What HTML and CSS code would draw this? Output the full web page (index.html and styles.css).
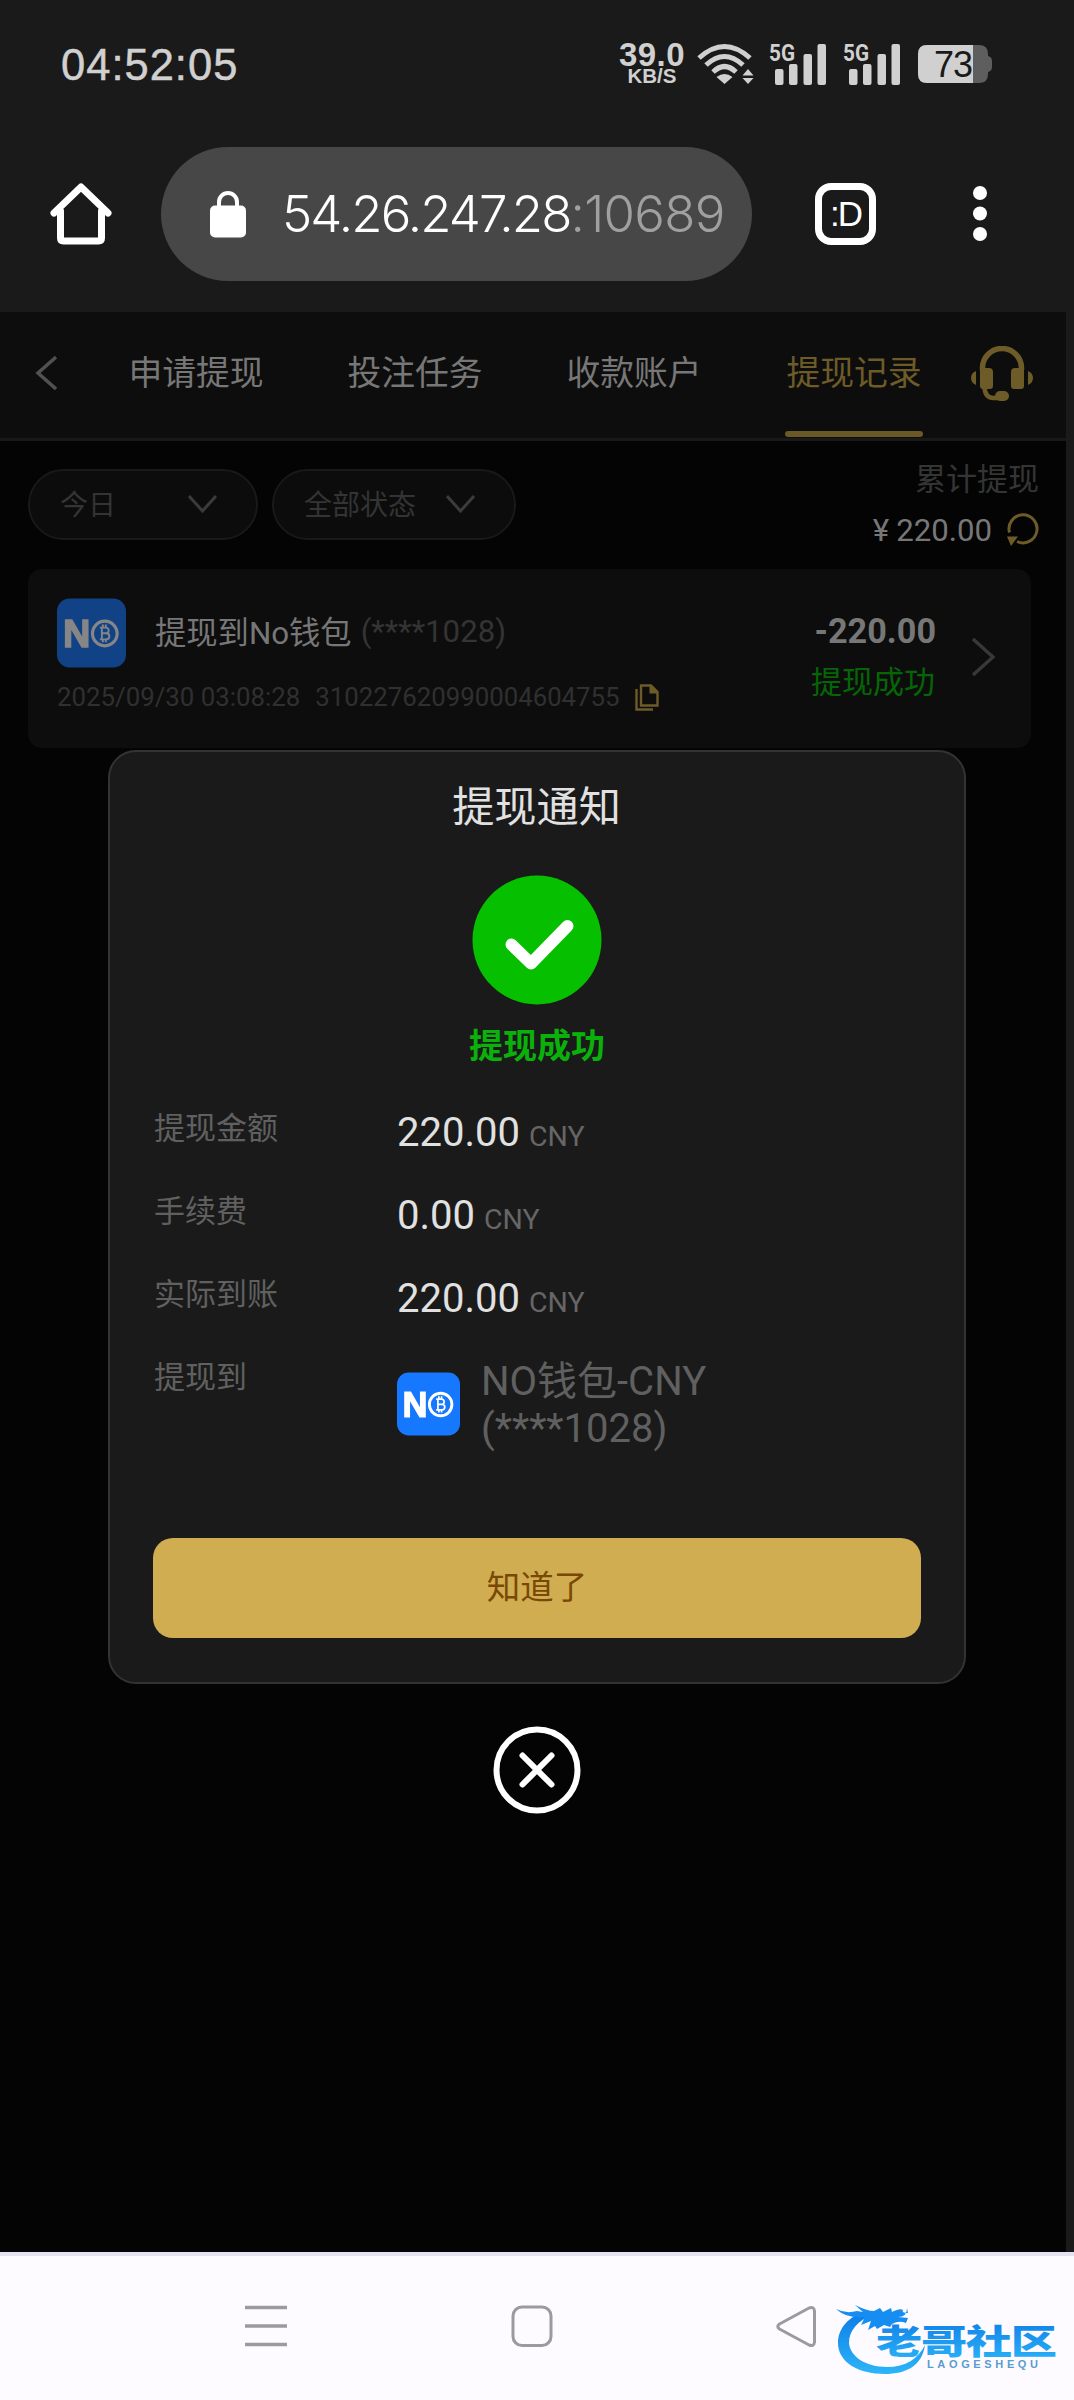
FILE: index.html
```html
<!DOCTYPE html>
<html lang="zh-CN">
<head>
<meta charset="utf-8">
<title>提现记录</title>
<link rel="stylesheet" href="styles.css">
</head>
<body>
<svg class="defs" width="0" height="0">
  <symbol id="no-logo" viewBox="0 0 70 70">
    <rect width="70" height="70" rx="13" fill="#1677ff"/>
    <path d="M8 50V21h7.500l10 17.500V21H32v29h-7L14.500 32v18z" fill="#fff"/>
    <circle cx="48.500" cy="35.500" r="12.500" fill="none" stroke="#fff" stroke-width="3.200"/>
    <path d="M43.500 29.500h6a2.900 2.900 0 0 1 0 5.800h-4 4.500a3.100 3.100 0 0 1 0 6.200h-6.500M45.500 29.500v12M46.500 26.500v3M49.500 26.500v3M46.500 41.500v3M49.500 41.500v3" fill="none" stroke="#fff" stroke-width="1.900"/>
  </symbol>
  <symbol id="bars" viewBox="0 0 60 42">
    <rect x="6" y="26" width="8.500" height="16" rx="2"/><rect x="20" y="21" width="8.500" height="21" rx="2"/><rect x="34.500" y="11" width="8.500" height="31" rx="2"/><rect x="48.500" y="1" width="8.500" height="41" rx="2"/>
  </symbol>
</svg>

<header class="browser">
  <div class="status">
    <span class="clock">04:52:05</span>
    <div class="speed"><b>39.0</b><span>KB/S</span></div>
    <svg class="wifi" width="60" height="42" viewBox="0 0 60 42" fill="none" stroke="#d0d0d0" stroke-width="5">
      <path d="M2 15Q27.500-8 53 15M9 22Q27.500 5 46 22M16 29Q27.500 18 39 29"/>
      <path d="M27.500 41l-8-7q8-6 16 0zM51 26l5.500 6.500h-11zM51 41l5.500-6h-11z" fill="#d0d0d0" stroke="none"/>
    </svg>
    <svg class="signal" width="60" height="42"><text x="0" y="18" font-size="24" font-weight="700" textLength="26" lengthAdjust="spacingAndGlyphs">5G</text><use href="#bars"/></svg>
    <svg class="signal second" width="60" height="42"><text x="0" y="18" font-size="24" font-weight="700" textLength="26" lengthAdjust="spacingAndGlyphs">5G</text><use href="#bars"/></svg>
    <svg class="battery" width="76" height="42" viewBox="0 0 76 42">
      <path d="M10 2h52q9 0 9 9v2q4 1 4 5v6q0 4-4 5v2q0 9-9 9H10q-9 0-9-9V11q0-9 9-9z" fill="#5e5e5e"/>
      <path d="M10 2h46v38H10q-9 0-9-9V11q0-9 9-9z" fill="#d0d0d0"/>
      <text x="17" y="34" font-size="36" textLength="39" fill="#1a1a1a">73</text>
    </svg>
  </div>
  <div class="toolbar">
    <svg class="home" width="62" height="62" viewBox="0 0 62 62" fill="none" stroke="#fff" stroke-width="7" stroke-linecap="round" stroke-linejoin="round">
      <path d="M4 30L31 4l27 26M10.500 28v27q0 3 3 3h35q3 0 3-3V28"/>
    </svg>
    <div class="address">
      <svg width="36" height="48" viewBox="0 0 36 48"><path d="M9 18v-6a9 9 0 0 1 18 0v6" fill="none" stroke="#fff" stroke-width="4"/><rect y="15.500" width="36" height="32" rx="5" fill="#fff"/></svg>
      <span class="url">54.26.247.28<i>:10689</i></span>
    </div>
    <div class="tabs-button">:D</div>
    <svg class="dots" width="14" height="56" viewBox="0 0 14 56" fill="#fff"><circle cx="7" cy="7" r="7"/><circle cx="7" cy="27.500" r="7"/><circle cx="7" cy="48" r="7"/></svg>
  </div>
</header>

<main class="page">
  <nav class="topnav">
    <svg class="back" width="22" height="36" viewBox="0 0 22 36" fill="none" stroke="#515151" stroke-width="3.500"><path d="M21 2L3 18l18 16"/></svg>
    <span class="tab">申请提现</span>
    <span class="tab">投注任务</span>
    <span class="tab">收款账户</span>
    <span class="tab active">提现记录</span>
    <svg class="headset" width="62" height="56" viewBox="0 0 62 56" fill="#6d5b28">
      <path d="M11.500 24v-2a19.500 19.500 0 0 1 39 0v2" fill="none" stroke="#6d5b28" stroke-width="5.500"/>
      <path d="M9 22h9q4 0 4 4v14q0 3-3 3h-7q-3 0-3-3zM53 22h-9q-4 0-4 4v14q0 3 3 3h7q3 0 3-3zM5 25v14Q0 37 0 32t5-7zM57 25v14q5-2 5-7t-5-7z"/>
      <path d="M13.500 42q1 10 9 10h6" fill="none" stroke="#6d5b28" stroke-width="4.500"/><rect x="24" y="45" width="14" height="10" rx="5"/>
    </svg>
  </nav>

  <section class="filters">
    <div class="select today"><span>今日</span><svg width="29" height="19" viewBox="0 0 29 19"><path d="M1 1l13.500 15L28 1"/></svg></div>
    <div class="select state"><span>全部状态</span><svg width="29" height="19" viewBox="0 0 29 19"><path d="M1 1l13.500 15L28 1"/></svg></div>
    <div class="total">
      <div class="total-label">累计提现</div>
      <div class="total-value"><span class="yen">¥</span><span>220.00</span>
        <svg width="34" height="34" viewBox="0 0 34 34"><path d="M3.500 19.500A14 14 0 1 1 11 28.500" fill="none" stroke="#6d5b28" stroke-width="3"/><path d="M1 23.500h11L5 33z" fill="#6d5b28"/></svg>
      </div>
    </div>
  </section>

  <article class="record">
    <div class="record-main">
      <div class="record-title"><svg width="69" height="70"><use href="#no-logo"/></svg><span>提现到No钱包</span><em>(****1028)</em></div>
      <div class="record-meta"><span class="date">2025/09/30 03:08:28</span><span class="order">310227620990004604755</span>
        <svg width="24" height="28" viewBox="0 0 24 28" fill="none" stroke="#6d5b28" stroke-width="2.400"><path d="M1.500 5v20.500H18M6 1.500h10l6.500 6.500v13.500H6z"/><path d="M14.500 1v8.500H23L16 1z" fill="#6d5b28" stroke="none"/></svg>
      </div>
    </div>
    <div class="record-result"><b>-220.00</b><span>提现成功</span></div>
    <svg class="next" width="24" height="40" viewBox="0 0 24 40" fill="none" stroke="#383838" stroke-width="3.500"><path d="M2 2l20 18L2 38"/></svg>
  </article>
</main>

<footer class="sysnav">
  <svg width="42" height="44" viewBox="0 0 42 44" stroke="#9b9b9d" stroke-width="3.600"><path d="M0 2.500h42M0 21h42M0 39.500h42"/></svg>
  <svg class="nav-home" width="42" height="44" viewBox="0 0 42 44" fill="none" stroke="#9b9b9d" stroke-width="3"><rect x="2" y="2" width="38" height="38.500" rx="9"/></svg>
  <svg class="nav-back" width="42" height="44" viewBox="0 0 42 44" fill="none" stroke="#9b9b9d" stroke-width="3"><path d="M3.500 19L33 3q5-2 5.500 3v31q-.5 5-5.500 3L3.500 24q-3.500-2.500 0-5z"/></svg>
</footer>

<div class="modal">
  <h1>提现通知</h1>
  <svg class="success" width="130" height="130" viewBox="0 0 130 130"><circle cx="65" cy="65" r="64.500" fill="#06c000"/><path d="M39.500 69.500L59 88.500 95.500 51" fill="none" stroke="#fff" stroke-width="12" stroke-linecap="round" stroke-linejoin="round"/></svg>
  <div class="success-label">提现成功</div>
  <dl>
    <dt>提现金额</dt><dd>220.00<small>CNY</small></dd>
    <dt>手续费</dt><dd>0.00<small>CNY</small></dd>
    <dt>实际到账</dt><dd>220.00<small>CNY</small></dd>
    <dt>提现到</dt><dd class="wallet"><svg width="63" height="64"><use href="#no-logo"/></svg><span>NO钱包-CNY<br>(****1028)</span></dd>
  </dl>
  <button>知道了</button>
</div>
<svg class="close" width="88" height="88" viewBox="0 0 88 88" fill="none" stroke="#fff" stroke-width="6" stroke-linecap="round"><circle cx="44" cy="44" r="40.500"/><path d="M29.500 29.500l29 29M58.500 29.500l-29 29"/></svg>

<svg class="watermark" width="240" height="80" viewBox="0 0 240 80">
  <defs><linearGradient id="sea" x1="0" y1="0" x2="0" y2="1"><stop stop-color="#0d7be6"/><stop offset="1" stop-color="#2cb5f8"/></linearGradient></defs>
  <path d="M37 11C18 16 8 29 8 43c0 19 20 31 47 31 21 0 37-8 40-29-7 14-19 22-38 22-22 0-37-11-38-24 0-13 9-22 24-29z" fill="url(#sea)"/>
  <path d="M6 9q10 5 21 2l6 1-8-7q12 6 19 6l6-3 3 4 8-4 1 4q8-4 11-2-2 3 5 3l-1-5q0 9-9 9l10 1-2 5q-7-3-14 1l-2 3-6-2-7 4-2-3-7 4 3-9-10 4 4-8q-18 2-29-8z" fill="#168df0"/>
  <text class="brand" x="0" y="0" transform="translate(46 54) scale(1.36 1)" textLength="133">老哥社区</text>
  <text class="pinyin" x="97" y="67.500" textLength="111">LAOGESHEQU</text>
</svg>
</body>
</html>
```
FILE: styles.css
```css
* { box-sizing: border-box; }
body { margin: 0; width: 1074px; height: 2400px; position: relative; overflow: hidden; background: #1a1a1a; font-family: Roboto, "Noto Sans CJK SC", sans-serif; }
svg { display: block; flex: none; }
.defs { position: absolute; }
span, b, em, small { white-space: nowrap; }

.browser { height: 312px; color: #fff; }
.status { height: 130px; display: flex; align-items: flex-start; padding-top: 43px; color: #d0d0d0; fill: #d0d0d0; font-family: "Liberation Sans", sans-serif; }
.clock { width: 617px; padding-left: 61px; font-size: 43.5px; line-height: 44px; letter-spacing: 1px; -webkit-text-stroke: .5px #d0d0d0; }
.speed { width: 70px; display: flex; flex-direction: column; align-items: center; }
.speed b { font-size: 33px; line-height: 24px; letter-spacing: .5px; }
.speed span { font-size: 20.5px; line-height: 18px; font-weight: 700; }
.wifi { margin-left: 10px; }
.signal { margin-left: 12px; overflow: visible; font-family: Roboto, sans-serif; }
.signal.second { margin-left: 14px; }
.battery { margin-left: 14px; }
.toolbar { display: flex; align-items: center; height: 168px; padding-left: 50px; }
.address { display: flex; align-items: center; width: 591px; height: 134px; margin-left: 49px; padding-left: 49px; border-radius: 67px; background: #474747; }
.url { margin-left: 36px; font: 300 51px/60px Inter, "Liberation Sans", sans-serif; letter-spacing: -1.9px; }
.url i { color: #a0a0a0; font-style: normal; letter-spacing: -.7px; }
.tabs-button { width: 61px; height: 62px; margin-left: 63px; border: 7px solid #fff; border-radius: 16px; text-align: center; font: 35px/47px "Liberation Sans", sans-serif; letter-spacing: -2px; }
.dots { margin-left: 97px; }

.page { width: 1066px; height: 1940px; background: #040404; }
.topnav { display: flex; height: 129px; padding-left: 35px; background: #0d0d0d; border-bottom: 3px solid #191919; }
.back { margin-top: 43px; }
.tab { width: 138px; height: 125px; margin-left: 81px; text-align: center; font-size: 33.8px; line-height: 124px; color: #777; }
.back + .tab { margin-left: 70px; }
.tab.active { position: relative; margin-left: 82px; color: #6d5b28; }
.tab.active::after { content: ""; position: absolute; left: 0; bottom: 0; width: 138px; height: 6px; border-radius: 3px; background: #6a5827; }
.headset { margin: 34px 0 0 48px; }
.filters { display: flex; height: 128px; padding: 28px 27px 0 28px; }
.select { display: flex; align-items: center; height: 71px; border: 2px solid #191919; border-radius: 36px; background: #0c0c0c; color: #343434; font-size: 28px; padding-left: 30px; }
.select span { margin-top: -3px; }
.select svg { fill: none; stroke: #3b3b3b; stroke-width: 3; }
.today { width: 230px; }
.today svg { margin-left: 72px; }
.state { width: 244px; margin-left: 14px; }
.state svg { margin-left: 30px; }
.total { margin: -10px 0 0 auto; }
.total-label { text-align: right; font-size: 31px; line-height: 42px; color: #353535; }
.total-value { display: flex; align-items: center; height: 52px; margin: 3px -1px 0 0; color: #777; font-size: 31.2px; }
.yen { margin-right: 7px; }
.total-value svg { margin-left: 14px; }
.record { display: flex; width: 1003px; height: 179px; margin-left: 28px; padding: 29px 36px 0 29px; border-radius: 14px; background: #0d0d0d; }
.record-title { display: flex; align-items: center; height: 70px; color: #777; font-size: 31.3px; }
.record-title svg { opacity: .5; }
.record-title span { margin: -5px 0 0 29px; }
.record-title em { margin: -4px 0 0 9px; color: #343434; font-style: normal; font-size: 31.2px; }
.record-meta { display: flex; height: 58px; align-items: center; color: #303030; font-size: 25.800px; }
.order { margin-left: 15px; }
.record-meta svg { margin: 2px 0 0 15px; }
.record-result { display: flex; flex-direction: column; align-items: flex-end; margin-left: auto; }
.record-result b { margin-top: 13px; font-size: 34.200px; line-height: 40px; color: #777; }
.record-result span { margin-top: 10px; padding-right: 1px; font-size: 31px; line-height: 44px; color: #056605; }
.next { margin: 39px 0 0 35px; }

.sysnav { display: flex; align-items: flex-start; height: 148px; padding: 49px 0 0 245px; background: #fdfbff; border-top: 4px solid #e2e2f0; }
.nav-home { margin-left: 224px; }
.nav-back { margin-left: 223px; }

.modal { position: absolute; left: 108px; top: 750px; width: 858px; height: 934px; padding: 0 43px; border: 2px solid #333; border-radius: 28px; background: #1a1a1a; }
.modal h1 { margin: 27px 1px 0 0; height: 56px; text-align: center; font-size: 42.200px; line-height: 58px; font-weight: 400; color: #e1e1e1; }
.success { margin: 40px auto 0; }
.success-label { margin-top: 17px; text-align: center; font-size: 34px; line-height: 48px; font-weight: 700; color: #0bb10b; }
dl { display: grid; grid-template-columns: 243px auto; grid-template-rows: repeat(3, 83px) 110px; margin: 39px 0 0 1px; }
dt { font-size: 31px; line-height: 40px; color: #606060; }
dd { margin: 0; font-size: 40px; line-height: 47px; color: #e1e1e1; }
small { margin-left: 9px; font-size: 28.500px; color: #666; }
.wallet { display: flex; align-items: flex-start; color: #606060; font-size: 40px; line-height: 47px; }
.wallet svg { margin: 14px 21px 0 0; }
.modal button { display: block; width: 768px; height: 100px; margin: 70px 0 0; border: 0; border-radius: 20px; background: #d0ad51; color: #7a4805; font: 33.500px/98px Roboto, "Noto Sans CJK SC", sans-serif; }
.close { position: absolute; left: 493px; top: 1726px; }

.watermark { position: absolute; left: 830px; top: 2300px; overflow: visible; }
.brand { font: 900 34px "Noto Sans CJK SC", sans-serif; fill: url(#sea); }
.pinyin { font: 700 11px "Liberation Sans", sans-serif; fill: #5a9bd0; }
```
